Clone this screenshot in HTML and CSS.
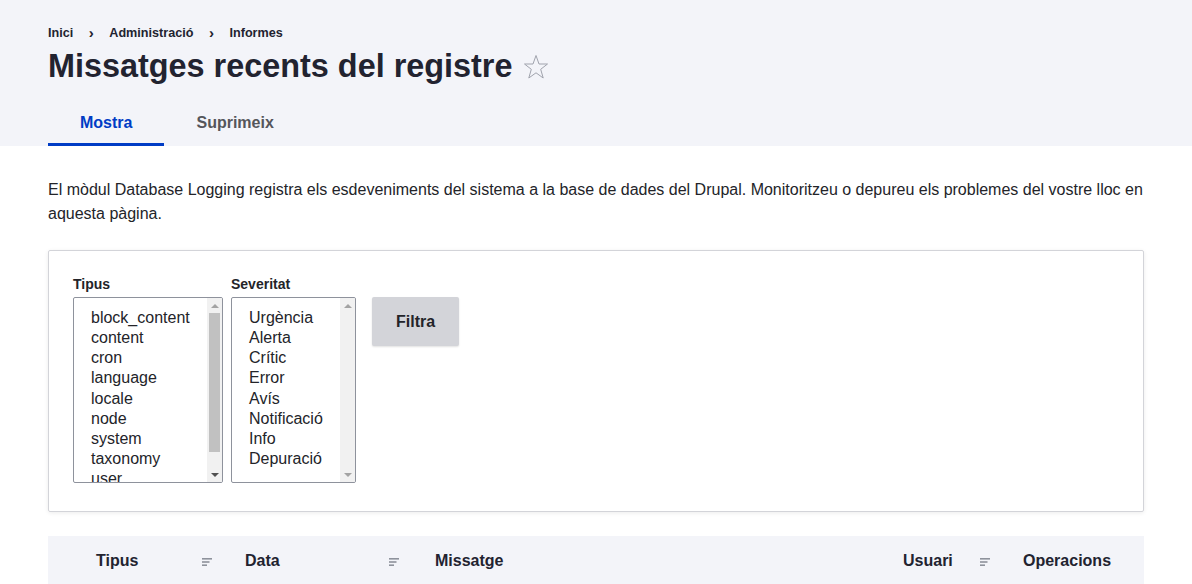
FILE: index.html
```html
<!DOCTYPE html>
<html lang="ca">
<head>
<meta charset="utf-8">
<title>Missatges recents del registre</title>
<link rel="stylesheet" href="styles.css">
</head>
<body>
<header class="page-header">
  <nav class="breadcrumb">
    <a href="#">Inici</a><span class="sep">›</span><a href="#">Administració</a><span class="sep">›</span><a href="#">Informes</a>
  </nav>
  <h1 class="title">Missatges recents del registre
    <svg class="star" width="26" height="26" viewBox="0 0 26 26"><polygon points="13,1.5 16,10 24.5,10 17.7,15.3 20.2,24 13,18.8 5.8,24 8.3,15.3 1.5,10 10,10" fill="none" stroke="#a0a3ad" stroke-width="1" stroke-linejoin="miter"/></svg>
  </h1>
  <nav class="tabs">
    <a class="tab active" href="#">Mostra</a>
    <a class="tab" href="#">Suprimeix</a>
  </nav>
</header>
<main class="content">
  <p class="intro">El mòdul Database Logging registra els esdeveniments del sistema a la base de dades del Drupal. Monitoritzeu o depureu els problemes del vostre lloc en aquesta pàgina.</p>
  <form class="filter">
    <div class="field">
      <label class="label">Tipus</label>
      <div class="listbox type" role="listbox" aria-multiselectable="true">
        <div class="options">
          <div class="option">block_content</div>
          <div class="option">content</div>
          <div class="option">cron</div>
          <div class="option">language</div>
          <div class="option">locale</div>
          <div class="option">node</div>
          <div class="option">system</div>
          <div class="option">taxonomy</div>
          <div class="option">user</div>
        </div>
        <div class="scrollbar">
          <span class="arrow up dim"></span>
          <span class="track"><span class="thumb"></span></span>
          <span class="arrow down"></span>
        </div>
      </div>
    </div>
    <div class="field">
      <label class="label">Severitat</label>
      <div class="listbox sev" role="listbox" aria-multiselectable="true">
        <div class="options">
          <div class="option">Urgència</div>
          <div class="option">Alerta</div>
          <div class="option">Crític</div>
          <div class="option">Error</div>
          <div class="option">Avís</div>
          <div class="option">Notificació</div>
          <div class="option">Info</div>
          <div class="option">Depuració</div>
        </div>
        <div class="scrollbar">
          <span class="arrow up dim"></span>
          <span class="track"></span>
          <span class="arrow down dim"></span>
        </div>
      </div>
    </div>
    <div class="actions">
      <button type="button" class="button">Filtra</button>
    </div>
  </form>
  <div class="table-head">
    <div class="th icon-col"></div>
    <div class="th c-type">Tipus <svg class="sort" width="12" height="12" viewBox="0 0 12 12"><rect x="1" y="2" width="10" height="1.6" fill="#8e929c"/><rect x="1" y="5.2" width="7.5" height="1.6" fill="#8e929c"/><rect x="1" y="8.4" width="5" height="1.6" fill="#8e929c"/></svg></div>
    <div class="th c-date">Data <svg class="sort" width="12" height="12" viewBox="0 0 12 12"><rect x="1" y="2" width="10" height="1.6" fill="#8e929c"/><rect x="1" y="5.2" width="7.5" height="1.6" fill="#8e929c"/><rect x="1" y="8.4" width="5" height="1.6" fill="#8e929c"/></svg></div>
    <div class="th c-msg">Missatge</div>
    <div class="th c-user">Usuari <svg class="sort" width="12" height="12" viewBox="0 0 12 12"><rect x="1" y="2" width="10" height="1.6" fill="#8e929c"/><rect x="1" y="5.2" width="7.5" height="1.6" fill="#8e929c"/><rect x="1" y="8.4" width="5" height="1.6" fill="#8e929c"/></svg></div>
    <div class="th c-ops">Operacions</div>
  </div>
</main>
</body>
</html>
```
FILE: styles.css
```css
* { box-sizing: border-box; }
html, body { margin: 0; padding: 0; background: #fff; }
body {
  font-family: "Liberation Sans", Arial, sans-serif;
  color: #232429;
  font-size: 16px;
}
.page-header {
  background: #f3f4f9;
  padding: 25px 48px 0;
}
.breadcrumb {
  display: flex;
  align-items: center;
  font-size: 12.64px;
  font-weight: bold;
  line-height: 16px;
  height: 16px;
}
.breadcrumb a { color: #222330; text-decoration: none; }
.breadcrumb .sep {
  display: inline-block;
  width: 36px;
  text-align: center;
  font-size: 15px;
  color: #222330;
}
.title {
  margin: 5px 0 0;
  font-size: 32.4px;
  line-height: 40px;
  font-weight: bold;
  color: #222330;
  display: flex;
  align-items: center;
  gap: 11px;
}
.star { margin-top: 2px; }
.tabs {
  display: flex;
  margin-top: 18px;
}
.tab {
  display: block;
  padding: 0 32px;
  height: 42px;
  line-height: 38px;
  font-size: 16px;
  font-weight: bold;
  color: #55565b;
  text-decoration: none;
  border-bottom: 3px solid transparent;
}
.tab.active { color: #003cc5; border-bottom-color: #003cc5; }
.content { padding: 0 48px; }
.intro {
  margin: 32px 0 0;
  line-height: 24px;
  color: #232429;
}
.filter {
  margin-top: 24px;
  border: 1px solid #d3d4d9;
  border-radius: 2px;
  box-shadow: 0 1px 4px rgba(0,0,0,0.08);
  padding: 24px 24px 28px;
  display: flex;
  align-items: flex-start;
  gap: 8px;
}
.field { display: flex; flex-direction: column; }
.label {
  font-size: 14px;
  font-weight: bold;
  line-height: 18px;
  color: #232429;
  margin-bottom: 4px;
}
.listbox {
  display: flex;
  height: 186px;
  border: 1px solid #8e929c;
  border-radius: 2px;
  background: #fff;
  overflow: hidden;
}
.listbox.type { width: 150px; }
.listbox.sev { width: 125px; }
.options {
  flex: 1;
  padding: 10px 0 0 17px;
  overflow: hidden;
  color: #232429;
  font-size: 16px;
}
.option { height: 20.125px; line-height: 20px; white-space: nowrap; }
.scrollbar {
  width: 15px;
  flex: none;
  background: #f1f1f1;
  display: flex;
  flex-direction: column;
}
.arrow {
  height: 15px;
  flex: none;
  display: flex;
  align-items: center;
  justify-content: center;
}
.arrow::before {
  content: "";
  width: 0;
  height: 0;
  border-left: 4px solid transparent;
  border-right: 4px solid transparent;
}
.arrow.up::before { border-bottom: 4px solid #505050; }
.arrow.down::before { border-top: 4px solid #505050; }
.arrow.up.dim::before { border-bottom-color: #a3a3a3; }
.arrow.down.dim::before { border-top-color: #a3a3a3; }
.track {
  flex: 1;
  display: flex;
  flex-direction: column;
  padding: 0 2px;
}
.thumb {
  height: 139px;
  background: #c1c1c1;
}
.actions { padding-top: 22px; margin-left: 8px; }
.button {
  height: 49px;
  padding: 0 24px;
  border: 0;
  border-radius: 2px;
  background: #d3d4d9;
  font-family: "Liberation Sans", Arial, sans-serif;
  font-size: 16px;
  font-weight: bold;
  color: #232429;
  box-shadow: 0 1px 2px rgba(0,0,0,0.12);
}
.table-head {
  margin-top: 24px;
  background: #f3f4f9;
  display: flex;
  height: 48px;
  padding-top: 2px;
  align-items: center;
  font-weight: bold;
  color: #222330;
}
.th {
  display: flex;
  align-items: center;
  justify-content: space-between;
  padding: 0 16px;
  line-height: 20px;
}
.sort { margin-top: 2px; }
.icon-col { width: 32px; padding: 0; }
.c-type { width: 149px; }
.c-date { width: 190px; padding-right: 19px; }
.c-msg { width: 468px; }
.c-user { width: 120px; }
.c-ops { flex: 1; }
```
